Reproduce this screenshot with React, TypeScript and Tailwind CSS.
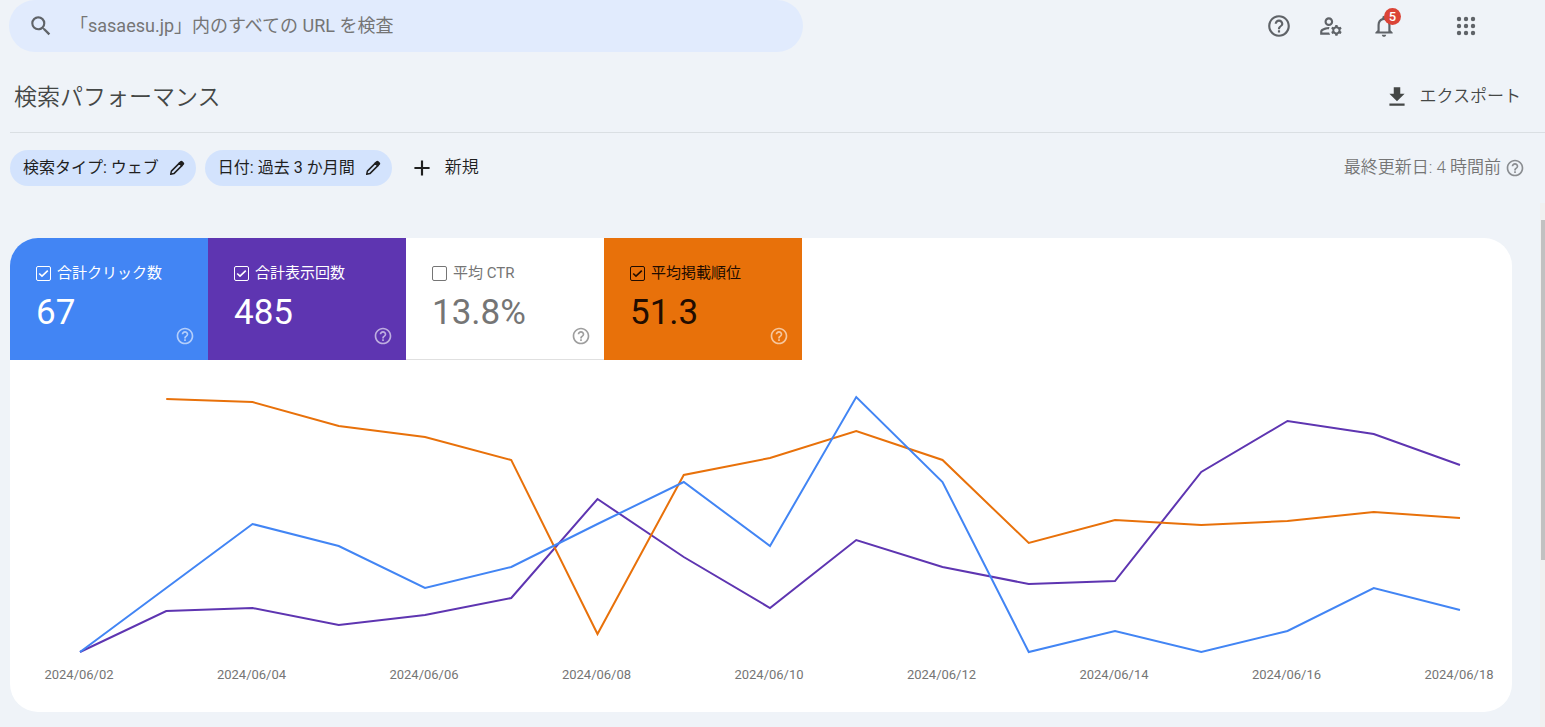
import { useState } from 'react';
import {
  MdAdd,
  MdHelpOutline,
  MdNotificationsNone,
  MdOutlineManageAccounts,
  MdSearch,
} from 'react-icons/md';

interface Metric {
  id: string;
  label: string;
  value: string;
  card: string;
  help: string;
}

interface Series {
  id: string;
  color: string;
  start: number;
  points: number[];
}

const metrics: Metric[] = [
  { id: 'clicks', label: '合計クリック数', value: '67', card: 'bg-[#4285f4] text-white', help: 'text-white/60' },
  { id: 'impressions', label: '合計表示回数', value: '485', card: 'bg-[#5e35b1] text-white', help: 'text-white/60' },
  { id: 'ctr', label: '平均 CTR', value: '13.8%', card: 'bg-white text-[#757575] border-b border-[#e0e0e0]', help: 'text-[#9e9e9e]' },
  { id: 'position', label: '平均掲載順位', value: '51.3', card: 'bg-[#e8710a] text-[#210c00]', help: 'text-white/60' },
];

// Vertical positions in the 300px high plot area, one per day
const series: Series[] = [
  {
    id: 'impressions',
    color: '#5e35b1',
    start: 0,
    points: [292, 251, 248, 265, 255, 238, 139, 197, 248, 180, 207, 224, 221, 112, 61, 74, 105],
  },
  {
    id: 'position',
    color: '#e8710a',
    start: 1,
    points: [39, 42, 66, 77, 100, 274, 115, 98, 71, 100, 183, 160, 165, 161, 152, 158],
  },
  {
    id: 'clicks',
    color: '#4285f4',
    start: 0,
    points: [292, 228, 164, 186, 228, 207, 164, 122, 186, 37, 122, 292, 271, 292, 271, 228, 250],
  },
];

const dates = [
  '2024/06/02',
  '2024/06/04',
  '2024/06/06',
  '2024/06/08',
  '2024/06/10',
  '2024/06/12',
  '2024/06/14',
  '2024/06/16',
  '2024/06/18',
];

const toPoints = (s: Series) =>
  s.points.map((y, i) => `${70 + ((i + s.start) * 1380) / 16},${y}`).join(' ');

const AppsIcon = () => (
  <svg viewBox="0 0 24 24" className="size-6" fill="currentColor">
    {[5, 12, 19].map(y => [5, 12, 19].map(x => <circle key={`${x}-${y}`} cx={x} cy={y} r={2.2} />))}
  </svg>
);

const PencilIcon = () => (
  <svg viewBox="0 0 18 18" className="size-[18px]">
    <path d="M2.7 15.3l.7-3.2 8-8 2.5 2.5-8 8z" fill="none" stroke="currentColor" strokeWidth="1.5" strokeLinejoin="round" />
    <path d="M10.2 4.3l2-2c.7-.7 1.6-.7 2.3 0l1.2 1.2c.7.7.7 1.6 0 2.3l-2 2z" fill="currentColor" />
  </svg>
);

const Header = () => (
  <header className="flex items-center justify-between">
    <div className="-ml-px flex h-[52px] w-full max-w-[794px] items-center rounded-full bg-[#e1ebfd] pl-[19px] text-[#5f6368]">
      <MdSearch className="size-[26px] shrink-0" />
      <input
        type="text"
        aria-label="URL を検査"
        placeholder="「sasaesu.jp」内のすべての URL を検査"
        className="ml-4 min-w-0 flex-1 bg-transparent text-lg outline-none placeholder:text-[#757575]"
      />
    </div>
    <div className="flex items-center pr-[67px] text-[#5f6368]">
      <button aria-label="ヘルプ" className="mr-[26px]">
        <MdHelpOutline className="size-[26px]" />
      </button>
      <button aria-label="ユーザーと権限" className="mr-[27px]">
        <MdOutlineManageAccounts className="size-[26px]" />
      </button>
      <button aria-label="通知" className="relative mr-[57px]">
        <MdNotificationsNone className="size-[26px]" />
        <span className="absolute -top-[5px] left-[13px] flex size-[17px] items-center justify-center rounded-full bg-[#db4437] text-[13px] font-medium text-white">
          5
        </span>
      </button>
      <button aria-label="アプリ">
        <AppsIcon />
      </button>
    </div>
  </header>
);

const Chip = ({ text }: { text: string }) => (
  <button className="flex h-9 items-center gap-[9px] rounded-full bg-[#d3e3fd] pr-2.5 pl-[13px] text-base text-[#1f1f1f]">
    {text}
    <PencilIcon />
  </button>
);

interface MetricCardProps {
  metric: Metric;
  checked: boolean;
  onToggle: () => void;
}

const MetricCard = ({ metric, checked, onToggle }: MetricCardProps) => (
  <div className={`flex h-[122px] w-[198px] flex-col pt-[25px] pr-[13px] pl-[26px] ${metric.card}`}>
    <label className="flex items-center gap-1.5 text-[15px] leading-5">
      <span className="grid place-items-center">
        <input
          type="checkbox"
          checked={checked}
          onChange={onToggle}
          className="col-start-1 row-start-1 size-[15px] appearance-none rounded-[2px] border border-current"
        />
        {checked && (
          <svg viewBox="0 0 15 15" className="pointer-events-none col-start-1 row-start-1 size-[15px]" fill="none" stroke="currentColor" strokeWidth="1.6">
            <path d="M3.2 7.5l2.8 2.7 5.8-5.6" />
          </svg>
        )}
      </span>
      {metric.label}
    </label>
    <div className="mt-[9px] text-[35px] leading-[42px]">{metric.value}</div>
    <button aria-label={`${metric.label}のヘルプ`} className={`-mt-2 self-end ${metric.help}`}>
      <MdHelpOutline className="size-5" />
    </button>
  </div>
);

const App = () => {
  const [selected, setSelected] = useState<string[]>(['clicks', 'impressions', 'position']);

  const toggle = (id: string) => {
    setSelected(prev => (prev.includes(id) ? prev.filter(s => s !== id) : [...prev, id]));
  };

  return (
    <div className="flex min-h-screen flex-col bg-[#eff3f8] pl-2.5 font-[Roboto,'Noto_Sans_CJK_JP',sans-serif]">
      <Header />

      <div className="flex h-[81px] items-center justify-between border-b border-[#dadfe3] pt-2.5 pr-6 pl-1 text-[#444746]">
        <h1 className="pt-0.5 text-[23px] font-[350]">検索パフォーマンス</h1>
        <button className="flex items-center gap-2.5 text-[17px] font-[350]">
          <svg viewBox="0 0 24 24" className="size-[26px]" fill="currentColor">
            <path d="M19 9h-4V3H9v6H5l7 7 7-7zM5 18v2h14v-2z" />
          </svg>
          エクスポート
        </button>
      </div>

      <div className="flex h-[70px] items-center justify-between pr-5">
        <div className="flex items-center gap-[9px]">
          <Chip text="検索タイプ: ウェブ" />
          <Chip text="日付: 過去 3 か月間" />
          <button className="ml-2 flex items-center gap-2.5 text-[17px] font-[350] text-[#1f1f1f]">
            <MdAdd className="size-[26px]" />
            新規
          </button>
        </div>
        <div className="flex items-center gap-1 text-[17px] font-[350] text-[#757575]">
          最終更新日: 4 時間前
          <button aria-label="最終更新日のヘルプ" className="text-[#8a8d91]">
            <MdHelpOutline className="size-5" />
          </button>
        </div>
      </div>

      <div className="flex flex-1">
        <main className="min-w-0 flex-1 pt-[35px] pr-7 pb-[15px]">
          <section className="overflow-hidden rounded-[28px] bg-white pb-7">
            <div className="flex">
              {metrics.map(m => (
                <MetricCard key={m.id} metric={m} checked={selected.includes(m.id)} onToggle={() => toggle(m.id)} />
              ))}
            </div>
            <svg viewBox="0 0 1502 300" preserveAspectRatio="none" className="block h-[300px] w-full" fill="none">
              {series
                .filter(s => selected.includes(s.id))
                .map(s => (
                  <polyline key={s.id} points={toPoints(s)} stroke={s.color} strokeWidth="2" vectorEffect="non-scaling-stroke" />
                ))}
            </svg>
            <div className="flex justify-between pt-1.5 pr-[18px] pl-[34px] text-[13px] leading-[18px] text-[#757575]">
              {dates.map(d => (
                <span key={d} className="w-[70px] text-center">{d}</span>
              ))}
            </div>
          </section>
        </main>
        {/* Scrollbar */}
        <div className="w-[5px] bg-[#f0f0f0] pt-[17px] pl-px">
          <div className="h-[340px] bg-[#c1c1c1]" />
        </div>
      </div>
    </div>
  );
};

export default App;
